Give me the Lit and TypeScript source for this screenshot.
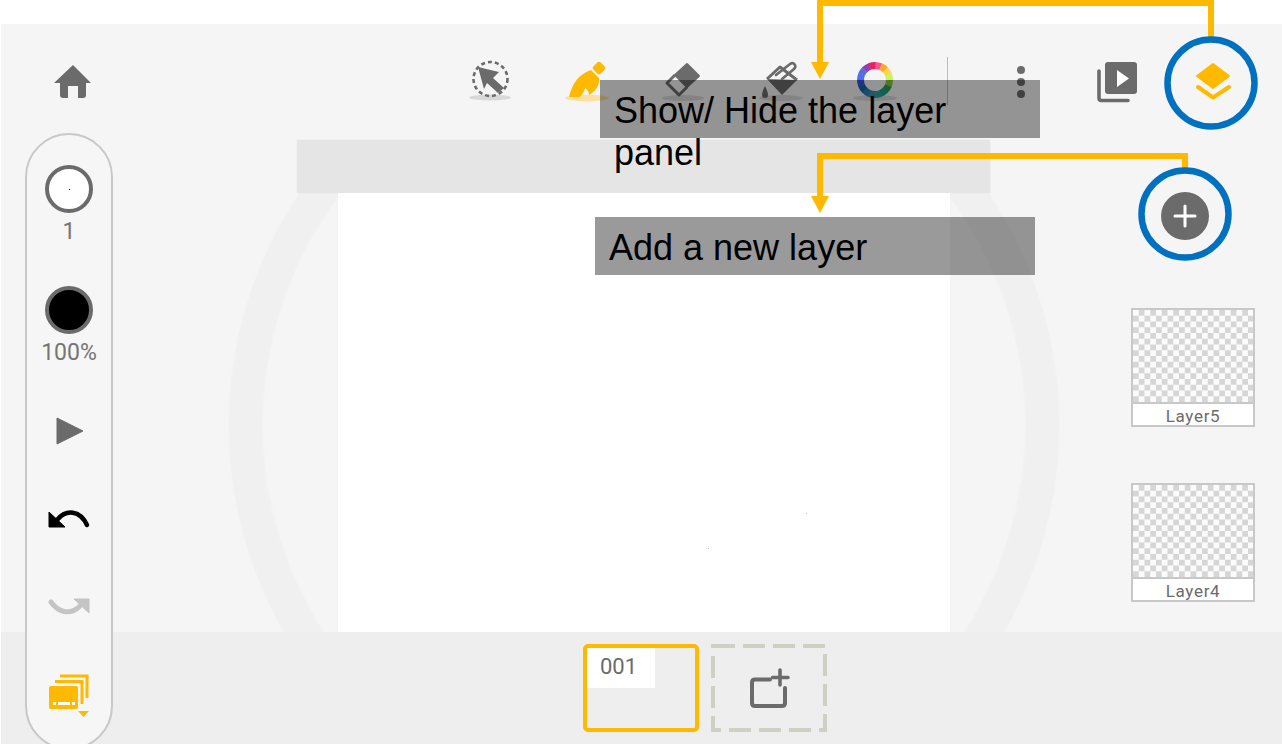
import { LitElement, html, css, svg } from "lit";
import { customElement } from "lit/decorators.js";

const GRAY = "#6b6b6b";
const YEL = "#ffb900";
const WHEEL = ["#f5568b","#ffa726","#ffd54f","#c6f560","#8bc34a","#2e9e4f","#1f9e8f","#26a69a","#3f8fb0","#2a7fb5","#1c5fb0","#3457d5","#4f6ef0","#5c6bd8","#8e3fb0","#ec1f60"];

function wheel() {
  const r = 14.5;
  const c = 2 * Math.PI * r;
  const n = WHEEL.length;
  const seg = c / n;
  return WHEEL.map((col, i) =>
    svg`<circle cx="875" cy="80" r=${r} fill="none" stroke=${col} stroke-width="7"
      stroke-dasharray="${seg + 0.3} ${c - seg - 0.3}" transform="rotate(${-90 + (i * 360) / n} 875 80)"></circle>`);
}

@customElement("app-root")
export class AppRoot extends LitElement {
  static styles = css`
    :host { display: block; width: 1282px; height: 744px; overflow: hidden; background: #fff; position: relative; font-family: Roboto, "Liberation Sans", sans-serif; }
    .top { height: 24px; }
    .stage { position: relative; height: 720px; box-sizing: border-box; border-left: 1px solid #fff; background: #f5f5f5; overflow: hidden; display: flex; flex-direction: column; }
    .toolbar { height: 116px; padding: 26px 0 0 42px; box-sizing: border-box; display: flex; align-items: flex-start; position: relative; z-index: 1; flex: none; }
    .toolbar svg { width: 60px; height: 60px; flex: none; display: block; overflow: visible; }
    .ms { margin-left: 357px; } .m-b { margin-left: 37px; } .m-e { margin-left: 36px; } .m-k { margin-left: 39px; } .m-w { margin-left: 33px; }
    .divider { width: 1px; height: 48px; margin: 7px 0 0 42px; background: #bdbdbd; flex: none; }
    .m-d { margin-left: 43px; } .m-p { margin-left: 36px; } .m-l { margin-left: 36px; }
    .main { flex: 1; display: flex; position: relative; min-height: 0; }
    .ring-clip { position: absolute; left: 0; right: 0; top: 53px; bottom: 0; overflow: hidden; }
    .ring { position: absolute; left: 228px; top: -183px; width: 830px; height: 830px; box-sizing: border-box; border-radius: 50%; border: 33px solid #f0f0f0; box-shadow: 0 0 3px rgba(0,0,0,.025), inset 0 0 3px rgba(0,0,0,.04); }
    .canvas-col { position: relative; margin-left: 296px; width: 693px; display: flex; flex-direction: column; flex: none; }
    .band { height: 53px; background: #e5e5e5; flex: none; box-shadow: 0 0 2px rgba(0,0,0,.05); }
    .canvas { flex: 1; margin: 0 40px 0 41px; background: #fff; position: relative; }
    .speck { position: absolute; width: 1px; height: 1px; background: #bbb; }
    .s1 { left: 468px; top: 320px; } .s2 { left: 370px; top: 355px; }
    .layers { position: relative; margin-left: 141px; width: 124px; display: flex; flex-direction: column; flex: none; }
    .add { width: 48px; height: 48px; margin: 52px 0 68px 30px; border-radius: 50%; background: #6b6b6b; display: flex; align-items: center; justify-content: center; flex: none; }
    .add svg { width: 26px; height: 26px; display: block; }
    .layer { width: 124px; height: 119px; box-sizing: border-box; border: 2px solid #c8c8c8; display: flex; flex-direction: column; margin-bottom: 56px; flex: none; }
    .check { flex: 1; border-bottom: 2px solid #c8c8c8; background-color: #fbfbfb; background-image: conic-gradient(#d6d6d6 25%, transparent 0 50%, #d6d6d6 0 75%, transparent 0); background-size: 11.5px 11.5px; }
    .lname { height: 21px; background: #fff; color: #6b6b6b; font-size: 17px; line-height: 24px; text-align: center; letter-spacing: .7px; flex: none; overflow: hidden; }
    .bottom { height: 112px; flex: none; background: #eee; position: relative; display: flex; gap: 12px; padding: 12px 0 0 582px; box-sizing: border-box; }
    .thumb { width: 116px; height: 88px; box-sizing: border-box; border: 4px solid #ffb900; border-radius: 5px; }
    .tlabel { width: 68px; height: 40px; box-sizing: border-box; background: #fff; color: #6b6b6b; font-size: 22px; line-height: 38px; padding-left: 13px; }
    .new { position: relative; width: 116px; height: 88px; display: flex; align-items: center; justify-content: center; }
    .frame { position: absolute; inset: 0; width: 116px; height: 88px; }
    .plus { position: relative; width: 44px; height: 44px; display: block; }
    .pill { position: absolute; left: 24px; top: 109px; width: 88px; height: 617px; box-sizing: border-box; border: 2px solid #c8c8c8; border-radius: 44px; background: #f6f6f6; display: flex; flex-direction: column; align-items: center; z-index: 2; }
    .dot { width: 48px; height: 48px; box-sizing: border-box; border: 4px solid #6b6b6b; border-radius: 50%; flex: none; display: flex; align-items: center; justify-content: center; }
    .d-w { margin-top: 30px; background: #fff; }
    .d-w i { width: 1px; height: 1px; background: #000; display: block; }
    .d-b { margin-top: 42px; background: #000; }
    .lab { margin-top: 7px; height: 24px; line-height: 24px; font-size: 23px; color: #757575; flex: none; }
    .pill svg { width: 60px; flex: none; display: block; overflow: visible; }
    .p-play { height: 40px; margin-top: 45px; } .p-undo { height: 36px; margin-top: 50px; } .p-redo { height: 36px; margin-top: 52px; } .p-stack { height: 52px; margin-top: 46px; }
    .tip { position: absolute; width: 440px; height: 58px; box-sizing: border-box; padding: 10px 14px 0; background: rgba(0,0,0,.395); color: #000; font-family: "Liberation Sans", Arial, sans-serif; font-size: 36px; line-height: 42px; z-index: 3; }
    .t1 { left: 600px; top: 80px; } .t2 { left: 595px; top: 217px; }
    .anno { position: absolute; left: 0; top: 0; width: 1282px; height: 744px; z-index: 4; pointer-events: none; }
  `;

  render() {
    return html`
      <div class="top"></div>
      <div class="stage">
        <div class="toolbar">
          <svg viewBox="43 50 60 60"><path d="M73 65 L54 83 H60 V95 Q60 98 63 98 H68 V86 H78 V98 H83 Q86 98 86 95 V83 H91 Z" fill="${GRAY}"/></svg>
          <svg class="ms" viewBox="460 50 60 60">
            <ellipse cx="490" cy="97.5" rx="21" ry="3" fill="#d9d9d9"/>
            <circle cx="490.5" cy="79" r="17" fill="none" stroke="${GRAY}" stroke-width="2.6" stroke-dasharray="4 3"/>
            <path d="M478 67 L499 72 L493 78 L504 88 L498 93 L487 83 L484 89 Z" fill="${GRAY}"/>
          </svg>
          <svg class="m-b" viewBox="557 50 60 60">
            <ellipse cx="587" cy="98" rx="22" ry="3.2" fill="#fde09f"/>
            <rect x="594" y="63" width="10" height="10" rx="2" transform="rotate(45 599 68)" fill="${YEL}"/>
            <path d="M569 97 C572 85 577 75 591 70 L599 78 C600 85 595 92 589 95 C589 92 587 89 585 88 C584 92 582 96 579 97 Z" fill="${YEL}"/>
          </svg>
          <svg class="m-e" viewBox="653 50 60 60">
            <ellipse cx="683" cy="98" rx="21" ry="3" fill="#d9d9d9"/>
            <path d="M687 64 L699 76 L687 87 L675 75 Z" fill="${GRAY}" stroke="${GRAY}" stroke-width="2" stroke-linejoin="round"/>
            <path d="M675 75 L667 83 L679 95 L687 87" fill="none" stroke="${GRAY}" stroke-width="3" stroke-linejoin="round"/>
          </svg>
          <svg class="m-k" viewBox="752 50 60 60">
            <ellipse cx="781" cy="98" rx="22" ry="3" fill="#d9d9d9"/>
            <path d="M767 79 L782 95 L797 80 Z" fill="${GRAY}"/>
            <path d="M767 79 L780 67 L797 80" fill="none" stroke="${GRAY}" stroke-width="3" stroke-linejoin="round"/>
            <path d="M776 75 L790 64 Q793 62 795 65 Q796 67 794 69 L782 79" fill="none" stroke="${GRAY}" stroke-width="2.6" stroke-linecap="round"/>
            <path d="M765 86 Q762 92 762 95 A3 3 0 0 0 768 95 Q768 92 765 86 Z" fill="${GRAY}"/>
          </svg>
          <svg class="m-w" viewBox="845 50 60 60">
            <ellipse cx="875" cy="98" rx="22" ry="3" fill="#d9d9d9"/>
            ${wheel()}
          </svg>
          <div class="divider"></div>
          <svg class="m-d" viewBox="991 50 60 60">
            <circle cx="1021" cy="70" r="4" fill="${GRAY}"/><circle cx="1021" cy="82" r="4" fill="${GRAY}"/><circle cx="1021" cy="94" r="4" fill="${GRAY}"/>
          </svg>
          <svg class="m-p" viewBox="1087 50 60 60">
            <rect x="1105" y="62" width="32" height="32" rx="3" fill="${GRAY}"/>
            <path d="M1117 70 L1129 78.5 L1117 87 Z" fill="#fff"/>
            <path d="M1099 71 V98 Q1099 100.5 1101.5 100.5 H1128" fill="none" stroke="${GRAY}" stroke-width="3.6" stroke-linecap="round"/>
          </svg>
          <svg class="m-l" viewBox="1183 50 60 60">
            <path d="M1213 64 L1229 76 L1213 88 L1197 76 Z" fill="${YEL}" stroke="${YEL}" stroke-width="2" stroke-linejoin="round"/>
            <path d="M1198 87 L1213 97.5 L1229 87" fill="none" stroke="${YEL}" stroke-width="4" stroke-linecap="round" stroke-linejoin="round"/>
          </svg>
        </div>
        <div class="main">
          <div class="ring-clip"><div class="ring"></div></div>
          <div class="canvas-col">
            <div class="band"></div>
            <div class="canvas"><span class="speck s1"></span><span class="speck s2"></span></div>
          </div>
          <div class="layers">
            <div class="add"><svg viewBox="0 0 26 26"><path d="M13 3 V23 M3 13 H23" stroke="#fff" stroke-width="3" stroke-linecap="round"/></svg></div>
            <div class="layer"><div class="check"></div><div class="lname">Layer5</div></div>
            <div class="layer"><div class="check"></div><div class="lname">Layer4</div></div>
          </div>
        </div>
        <div class="bottom">
          <div class="thumb"><div class="tlabel">001</div></div>
          <div class="new">
            <svg class="frame" viewBox="0 0 116 88"><rect x="2" y="2" width="112" height="84" fill="none" stroke="#cfcfc3" stroke-width="4" stroke-dasharray="22 8"/></svg>
            <svg class="plus" viewBox="747 666 44 44">
              <path d="M770 679.5 H755 Q752 679.5 752 682.5 V703 Q752 706 755 706 H782 Q785 706 785 703 V688" fill="none" stroke="${GRAY}" stroke-width="4" stroke-linecap="round"/>
              <path d="M780 670 V685 M772.5 677.5 H788" stroke="${GRAY}" stroke-width="3.6" stroke-linecap="round"/>
            </svg>
          </div>
        </div>
        <div class="pill">
          <div class="dot d-w"><i></i></div>
          <div class="lab">1</div>
          <div class="dot d-b"></div>
          <div class="lab">100%</div>
          <svg class="p-play" viewBox="39 410 60 40"><path d="M57 418 L83 431 L57 444 Z" fill="${GRAY}" stroke="${GRAY}" stroke-width="1" stroke-linejoin="round"/></svg>
          <svg class="p-undo" viewBox="39 500 60 36">
            <path d="M57 520 C66 509 80 510 87 525" fill="none" stroke="#000" stroke-width="4.5" stroke-linecap="round"/>
            <path d="M49 512 V527 H65 Z" fill="#000" stroke="#000" stroke-width="1" stroke-linejoin="round"/>
          </svg>
          <svg class="p-redo" viewBox="39 588 60 36">
            <path d="M51 602 C58 612 70 616 80 606" fill="none" stroke="#c4c4c4" stroke-width="5" stroke-linecap="round"/>
            <path d="M74 599 H89 V613 Z" fill="#c4c4c4" stroke="#c4c4c4" stroke-width="1" stroke-linejoin="round"/>
          </svg>
          <svg class="p-stack" viewBox="39 670 60 52">
            <path d="M60 676 H87 V698" fill="none" stroke="${YEL}" stroke-width="3"/>
            <path d="M55 681.5 H82 V704" fill="none" stroke="${YEL}" stroke-width="3"/>
            <rect x="49" y="686" width="29" height="23" rx="2" fill="${YEL}"/>
            <rect x="53" y="702" width="3" height="3" fill="#fff"/><rect x="58" y="702" width="12" height="3" fill="#fff"/><rect x="72" y="702" width="3" height="3" fill="#fff"/>
            <path d="M78 711 H89 L83.5 717 Z" fill="${YEL}"/>
          </svg>
        </div>
      </div>
      <div class="tip t1">Show/ Hide the layer panel</div>
      <div class="tip t2">Add a new layer</div>
      <svg class="anno" viewBox="0 0 1282 744">
        <path d="M820 64 V3 H1211 V40" fill="none" stroke="${YEL}" stroke-width="6"/>
        <path d="M811 62 H829 L820 79 Z" fill="${YEL}"/>
        <path d="M820 198 V156 H1185 V171" fill="none" stroke="${YEL}" stroke-width="6"/>
        <path d="M811 196 H829 L820 213 Z" fill="${YEL}"/>
        <circle cx="1211" cy="83" r="43.5" fill="none" stroke="#0070c0" stroke-width="6.5"/>
        <circle cx="1185" cy="214" r="43.5" fill="none" stroke="#0070c0" stroke-width="6.5"/>
      </svg>
    `;
  }
}
